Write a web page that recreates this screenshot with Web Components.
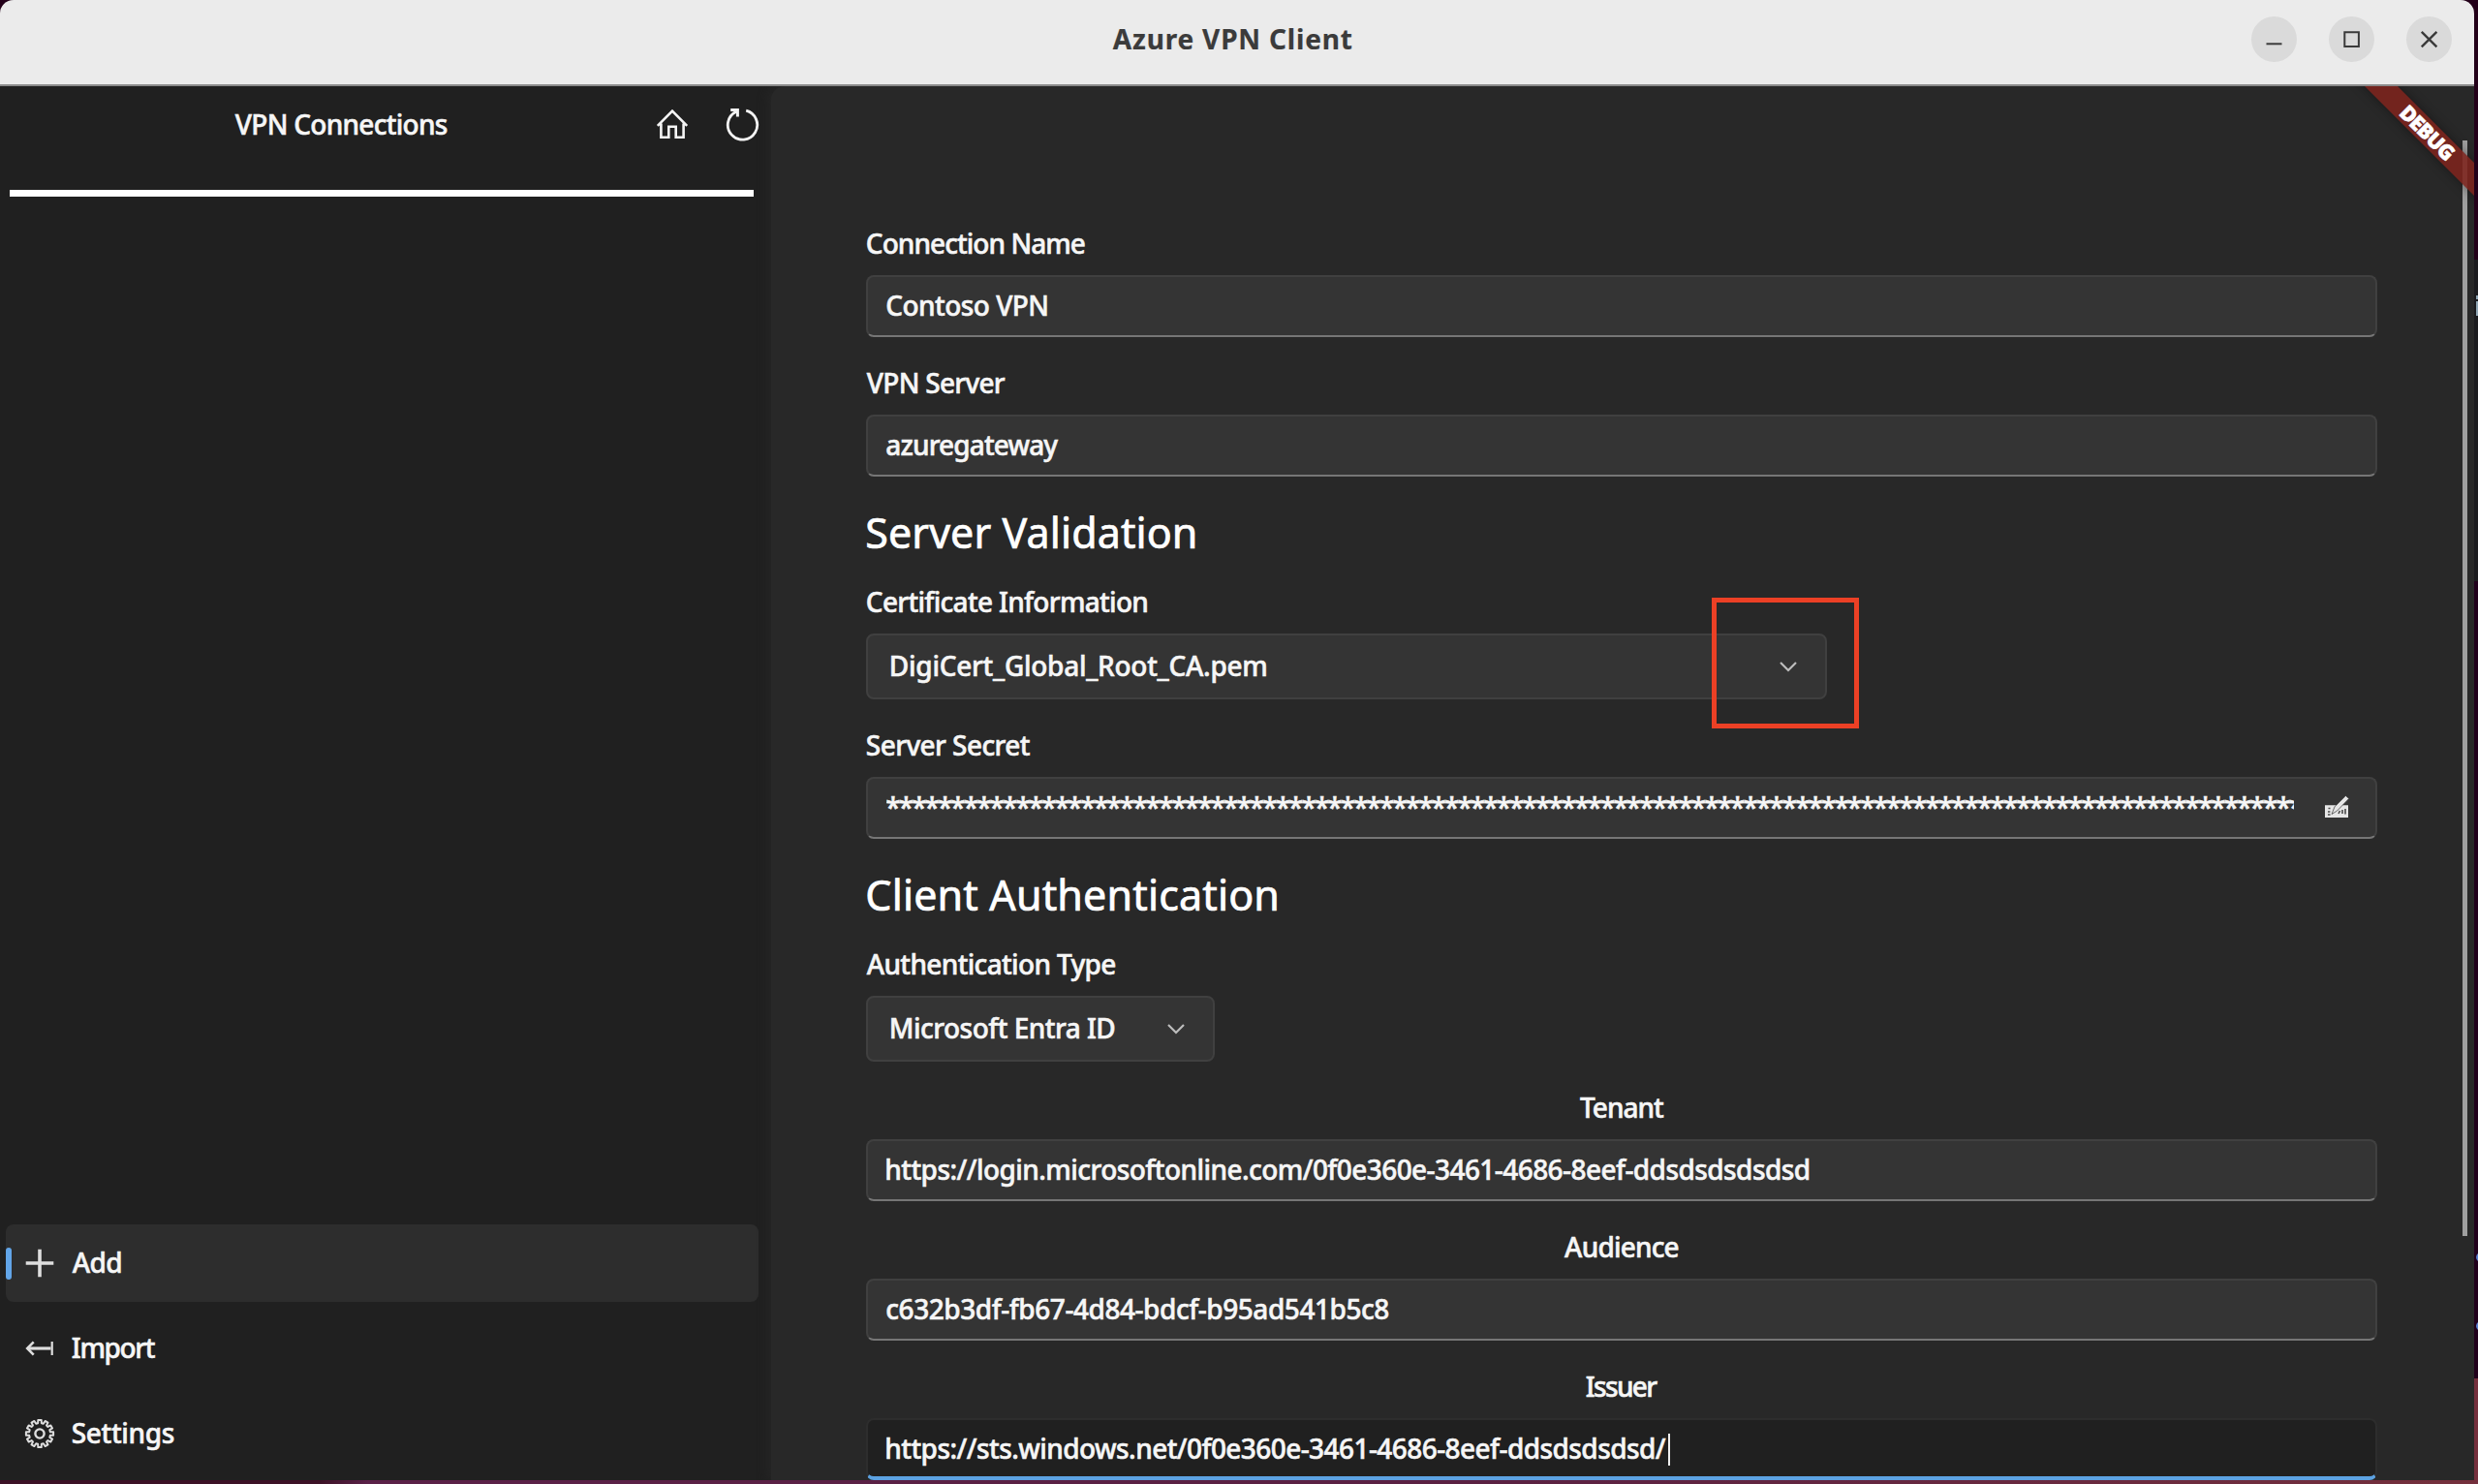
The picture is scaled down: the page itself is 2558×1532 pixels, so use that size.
<!DOCTYPE html>
<html lang="en">
<head>
<meta charset="utf-8">
<title>Azure VPN Client</title>
<style>
html,body{margin:0;height:100%;overflow:hidden;background:#230019}
body{font-family:"Noto Sans","Open Sans",sans-serif;font-size:28px;font-weight:500;color:#f6f6f6}
</style>
</head>
<body>
<vpn-app></vpn-app>
<script>
const define = (name, html, setup) => customElements.define(name, class extends HTMLElement {
  constructor() {
    super();
    this.attachShadow({ mode: 'open' }).innerHTML = html;
  }
  connectedCallback() { if (setup) setup(this, this.shadowRoot); }
});

/* Single line of text whose tracking is tuned so the ink spans `w` pixels. */
const pen = document.createElement('canvas').getContext('2d');
define('fit-text', `<style>:host{display:block;white-space:pre;flex:none;-webkit-text-stroke:var(--ink,.55px) currentColor}</style><slot></slot>`, el => {
  const w = +el.getAttribute('w') - .5;
  const text = el.textContent;
  const cs = getComputedStyle(el);
  pen.font = `${cs.fontWeight} ${cs.fontSize} ${cs.fontFamily}`;
  const m = pen.measureText(text);
  const ink = m.actualBoundingBoxRight + m.actualBoundingBoxLeft;
  const gap = (w - ink) / (text.length - 1);
  el.style.letterSpacing = gap.toFixed(3) + 'px';
  el.style.marginLeft = (m.actualBoundingBoxLeft + .8).toFixed(2) + 'px';
  el.style.marginRight = (-gap).toFixed(3) + 'px';
});

define('window-button', `<style>
:host{display:block;width:47px;height:47px;border-radius:50%;background:#dadada}
svg{display:block;width:47px;height:47px;fill:none;stroke:#3a3a3a;stroke-width:2}
</style><svg viewBox="0 0 47 47"></svg>`, (el, root) => {
  root.querySelector('svg').innerHTML = {
    min: '<path d="M15.5 28.3h16"/>',
    max: '<path d="M16.3 16.3h14.6v14.6h-14.6z"/>',
    close: '<path d="M15.8 15.8l15.6 15.6M31.4 15.8L15.8 31.4" stroke-width="2.4"/>'
  }[el.getAttribute('kind')];
});

define('title-bar', `<style>
:host{display:grid;grid-template-columns:1144px auto 1fr;height:89px;box-sizing:border-box;background:#ebebeb;border-bottom:2px solid #8a8a8a;border-radius:14px 14px 0 0;padding:0 0 8px 4px}
fit-text{grid-column:2;color:#3b3b3b;font-weight:700;line-height:80px;--ink:.2px}
.b{display:flex;gap:33px;justify-content:flex-end;padding:16.5px 23px 0 0}
</style><fit-text w="247.5">Azure VPN Client</fit-text>
<div class="b"><window-button kind="min"></window-button><window-button kind="max"></window-button><window-button kind="close"></window-button></div>`);

define('nav-item', `<style>
:host{display:flex;align-items:center;height:80px;border-radius:8px;box-sizing:border-box}
:host([selected]){background:#2d2d2d}
i{width:6px;height:33px;border-radius:3px;flex:none}
:host([selected]) i{background:#62a5e8}
svg{width:36px;height:36px;margin:0 15.5px 0 10.5px;fill:none;stroke:#dedede;flex:none}
::slotted(fit-text){line-height:78px;padding-bottom:2px}
</style><i></i><svg viewBox="-18 -18 36 36"></svg><slot></slot>`, (el, root) => {
  let gear = '';
  for (let k = 0; k < 12; k++) {
    const c = k * Math.PI / 6;
    for (const [r, d] of [[11, -.17], [14.2, -.12], [14.2, .12], [11, .17]])
      gear += (gear ? 'L' : 'M') + (r * Math.sin(c + d)).toFixed(2) + ' ' + (-r * Math.cos(c + d)).toFixed(2);
  }
  root.querySelector('svg').innerHTML = {
    add: '<path d="M-14.3 0h28.6M0-14.3v28.6" stroke-width="3.6"/>',
    import: '<path d="M-13 0H11.5" stroke-width="3.2"/><path d="M-6.3-6.6L-12.8 0l6.5 6.6" stroke-width="2.6"/><path d="M12.7-7V7" stroke-width="2.2"/>',
    gear: `<path d="${gear}Z" stroke-width="2" stroke-linejoin="round"/><circle r="4.6" stroke-width="2.4"/>`
  }[el.getAttribute('icon')];
});

define('side-panel', `<style>
:host{display:flex;flex-direction:column;width:796px;flex:none;box-sizing:border-box;background:#202020;padding:0 13px 8px 6px}
header{display:flex;height:107px;flex:none;padding-left:236px}
header fit-text{line-height:78px;width:219px}
svg{fill:none;stroke:#f4f4f4;flex:none}
.home{width:36px;height:36px;margin:21px 0 0 213.5px}
.ref{width:40px;height:40px;margin:20px 0 0 33.5px}
hr{margin:0 5px 0 4px;border:0;height:7px;background:#fff;flex:none}
nav{margin-top:auto;display:flex;flex-direction:column;gap:8px}
</style>
<header><fit-text w="219.5">VPN Connections</fit-text>
<svg class="home" viewBox="0 0 36 36"><path d="M2.8 19.8L18 4.6l15.2 15.2M6.4 17.5v14.2h7.9V20.8h7.4v10.9h7.9V17.5" stroke-width="2.6"/></svg>
<svg class="ref" viewBox="0 0 40 40"><path d="M24.2 5.2a15.2 15.2 0 1 1-10.2 1" stroke-width="2.8"/><path d="M8.2 4.6h7.2v7" stroke-width="3"/></svg>
</header><hr>
<nav>
<nav-item icon="add" selected><fit-text w="51">Add</fit-text></nav-item>
<nav-item icon="import"><fit-text w="86.5">Import</fit-text></nav-item>
<nav-item icon="gear"><fit-text w="105.5">Settings</fit-text></nav-item>
</nav>`);

define('form-field', `<style>
:host{display:flex;flex-direction:column;margin-top:28px;gap:14px}
.l{line-height:38px}
:host([centered]) .l{align-self:center}
</style><div class="l"><slot name="label"></slot></div><slot></slot>`);

define('text-input', `<style>
:host{display:flex;height:64px;box-sizing:border-box;background:#343434;border:2px solid #404040;border-bottom:2px solid #767676;border-radius:8px;padding:0 25px 0 18.5px;line-height:58px;overflow:hidden}
:host([focus]){background:#202020;border-color:#2d2d2d;border-bottom:4px solid #5ca2e2}
.caret{width:2px;height:33px;margin:14px 0 0 2.5px;background:#eee}
:host(:not([focus])) .caret{display:none}
</style><slot></slot><div class="caret"></div>`);

define('pen-icon', `<style>:host{display:block;margin:17px 0 0 auto;width:26px;height:24px}svg{display:block}</style>
<svg width="26" height="24" viewBox="0 0 26 24"><path d="M1 10.3h24V23H1z" fill="#e6e6e6"/><path d="M4.5 13.5h2M4 17h2.4M4 20h2.5M15 19l1.5-3M19 15v4M22 14v5.5" stroke="#4a4a4a" stroke-width="1.6" fill="none"/><path d="M8 19.5l3-7.6L22.4.4l3.4 3L13.6 16z" fill="#e6e6e6" stroke="#343434" stroke-width=".7"/></svg>`);

define('select-box', `<style>
:host{display:flex;align-items:center;justify-content:space-between;height:68px;box-sizing:border-box;background:#343434;border:2px solid #404040;border-radius:8px;padding:0 28.5px 0 23px;line-height:62px}
::slotted(fit-text){padding-bottom:2px}
svg{fill:none;stroke:#bdbdbd;stroke-width:2.2}
</style><slot></slot><svg width="20" height="14" viewBox="0 0 20 14"><path d="M2 3l8 8 8-8"/></svg>`);

define('section-title', `<style>:host{display:block;margin:27px 0 -6px .5px;font-size:43px;font-weight:400;line-height:61px;color:#fff;--ink:.7px}</style><slot></slot>`);

define('connection-form', `<style>
:host{display:block;flex:1;min-width:0;box-sizing:border-box;background:#282828;border-top-left-radius:14px;box-shadow:-2px 0 12px rgba(40,40,40,.9);padding:115px 100px 0 98px;overflow:hidden}
.cert{width:992px}.auth{width:360px}
.sel{position:relative}
.mark{position:absolute;left:872.5px;top:-37px;width:152px;height:135px;box-sizing:border-box;border:5px solid #ec4025}
.stars{width:1453px;overflow:hidden;--ink:.6px}
.stars fit-text{line-height:58px}
</style>
<form-field><fit-text slot="label" w="225.5">Connection Name</fit-text><text-input><fit-text w="166.5">Contoso VPN</fit-text></text-input></form-field>
<form-field><fit-text slot="label" w="143.5">VPN Server</fit-text><text-input><fit-text w="177.5">azuregateway</fit-text></text-input></form-field>
<section-title><fit-text w="339">Server Validation</fit-text></section-title>
<form-field><fit-text slot="label" w="290">Certificate Information</fit-text><div class="sel"><select-box class="cert"><fit-text w="388">DigiCert_Global_Root_CA.pem</fit-text></select-box><div class="mark"></div></div></form-field>
<form-field><fit-text slot="label" w="169.5">Server Secret</fit-text><text-input style="padding-right:27px"><div class="stars"><fit-text w="1463">*************************************************************************************************************</fit-text></div><pen-icon></pen-icon></text-input></form-field>
<section-title><fit-text w="423.5">Client Authentication</fit-text></section-title>
<form-field><fit-text slot="label" w="257">Authentication Type</fit-text><select-box class="auth"><fit-text w="231">Microsoft Entra ID</fit-text></select-box></form-field>
<form-field centered><fit-text slot="label" w="87.5">Tenant</fit-text><text-input><fit-text w="953">https://login.microsoftonline.com/0f0e360e-3461-4686-8eef-ddsdsdsdsdsd</fit-text></text-input></form-field>
<form-field centered><fit-text slot="label" w="118">Audience</fit-text><text-input><fit-text w="518.5">c632b3df-fb67-4d84-bdcf-b95ad541b5c8</fit-text></text-input></form-field>
<form-field centered><fit-text slot="label" w="74">Issuer</fit-text><text-input focus><fit-text w="805">https://sts.windows.net/0f0e360e-3461-4686-8eef-ddsdsdsdsd/</fit-text></text-input></form-field>`);

define('debug-banner', `<style>
:host{position:absolute;top:89px;right:4px;width:160px;height:160px;overflow:hidden;pointer-events:none}
div{position:absolute;left:12px;top:35.5px;width:200px;height:24px;transform:rotate(45deg);display:flex;justify-content:center;background:rgba(125,35,29,.88);box-shadow:0 0 12px rgba(0,0,0,.4);color:#fff;font-weight:900;font-size:21.5px;line-height:23px}
</style><div><fit-text w="69">DEBUG</fit-text></div>`);

define('scroll-thumb', `<style>:host{position:absolute;left:2541.5px;top:144.5px;width:5px;height:1131.5px;background:#9f9f9f}</style>`);

define('desktop-edge', `<style>
:host{position:absolute;right:0;top:0;width:4px;height:1532px;background:linear-gradient(#230019 268px,#1b1b1e 268px 600px,#20001b 600px 1423px,#74303d 1423px)}
svg{display:block}
</style><svg width="4" height="1532"><path d="M2 305h2v4h-2zM2 311h2v15h-2z" fill="#8fa5b3"/><path d="M4 1294a5 5 0 0 0 0 8zM4 1365a5 5 0 0 0 0 8z" fill="#5a7fd0"/></svg>`);

define('vpn-app', `<style>
:host{display:flex;flex-direction:column;width:2558px;height:1532px;box-sizing:border-box;padding-right:4px;position:relative;background:linear-gradient(#230019 1400px,transparent 1400px),linear-gradient(90deg,#3c1226 0 330px,#5a2148 380px,#5a2142 60%,#74303c)}
main{display:flex;height:1439px;background:#202020;overflow:hidden}
</style><title-bar></title-bar><main><side-panel></side-panel><connection-form></connection-form></main>
<scroll-thumb></scroll-thumb><debug-banner></debug-banner><desktop-edge></desktop-edge>`);
</script>
</body>
</html>
